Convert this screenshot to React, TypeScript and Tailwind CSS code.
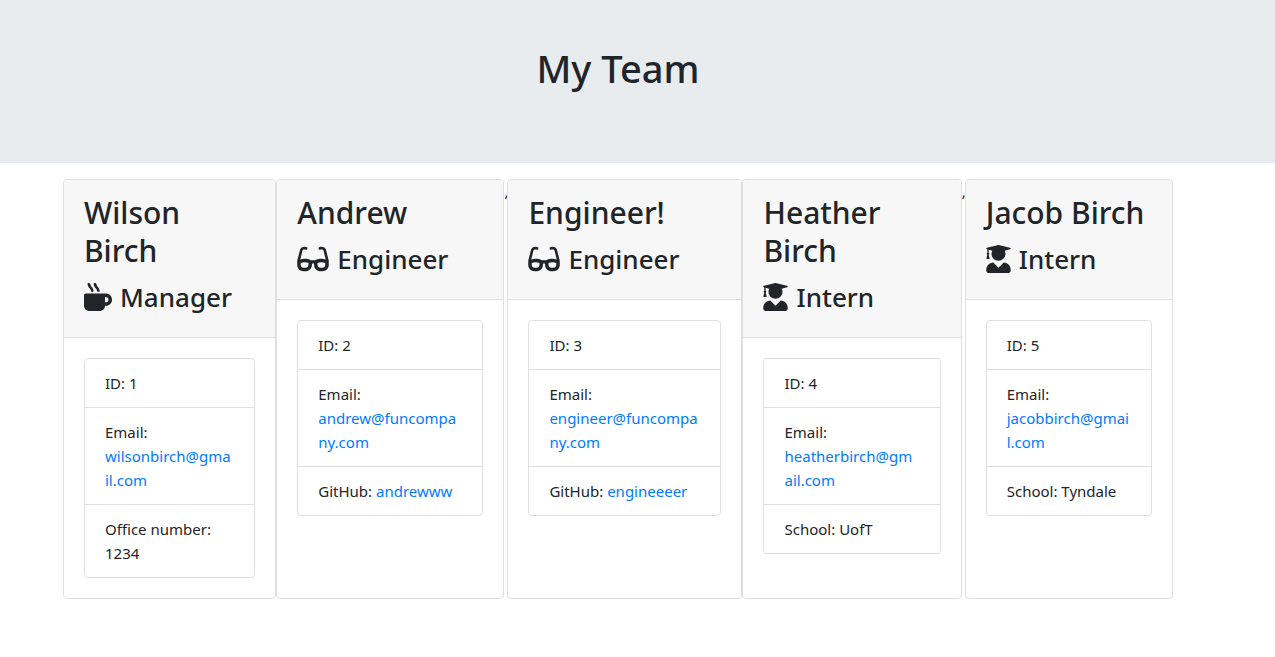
import { Fragment } from 'react';
import type { IconType } from 'react-icons';
import { FaGlasses, FaMugHot, FaUserGraduate } from 'react-icons/fa';

type Member = {
  name: string;
  role: keyof typeof roleIcons;
  id: number;
  email: string;
  label: string;
  value: string;
  href?: string;
  size: string;
  comma?: boolean;
};

const roleIcons: Record<'Manager' | 'Engineer' | 'Intern', { Icon: IconType; width: string }> = {
  Manager: { Icon: FaMugHot, width: 'w-7' },
  Engineer: { Icon: FaGlasses, width: 'w-8' },
  Intern: { Icon: FaUserGraduate, width: 'w-[25px]' },
};

const team: Member[] = [
  { name: 'Wilson Birch', role: 'Manager', id: 1, email: 'wilsonbirch@gmail.com', label: 'Office number', value: '1234', size: 'flex-[213_1_0]' },
  { name: 'Andrew', role: 'Engineer', id: 2, email: 'andrew@funcompany.com', label: 'GitHub', value: 'andrewww', href: 'https://github.com/andrewww', size: 'flex-[228_1_0]', comma: true },
  { name: 'Engineer!', role: 'Engineer', id: 3, email: 'engineer@funcompany.com', label: 'GitHub', value: 'engineeeer', href: 'https://github.com/engineeeer', size: 'flex-[235_1_0]' },
  { name: 'Heather Birch', role: 'Intern', id: 4, email: 'heatherbirch@gmail.com', label: 'School', value: 'UofT', size: 'flex-[219_1_0]', comma: true },
  { name: 'Jacob Birch', role: 'Intern', id: 5, email: 'jacobbirch@gmail.com', label: 'School', value: 'Tyndale', size: 'flex-[208_1_0]' },
];

function Card({ member }: { member: Member }) {
  const { name, role, id, email, label, value, href, size } = member;
  const { Icon, width } = roleIcons[role];
  return (
    <article className={`min-w-0 rounded border border-[#dfdfdf] bg-white ${size}`}>
      <header className="rounded-t-[3px] border-b border-[#dfdfdf] bg-[#f7f7f7] pt-3.5 pr-4 pb-[23px] pl-5">
        <h2 className="mb-2.5 text-[30px] leading-[38px] font-medium">{name}</h2>
        <h3 className="flex items-center gap-2 text-[26px] leading-[34px] font-medium">
          <Icon className={`h-7 shrink-0 ${width}`} aria-hidden="true" />
          {role}
        </h3>
      </header>
      <div className="p-5">
        <ul className="divide-y divide-[#dfdfdf] rounded border border-[#dfdfdf] wrap-break-word">
          <li className="px-5 py-3">ID: {id}</li>
          <li className="px-5 py-3">
            Email: <a href={`mailto:${email}`} className="text-[#007bff] hover:underline">{email}</a>
          </li>
          <li className="px-5 py-3">
            {label}: {href ? <a href={href} className="text-[#007bff] hover:underline">{value}</a> : value}
          </li>
        </ul>
      </div>
    </article>
  );
}

export default function App() {
  return (
    <div className="font-['Noto_Sans',sans-serif] text-[15px] leading-6 text-[#212529]">
      <header className="mb-4 bg-[#e9ecef] pt-11 pr-[102px] pb-[71px] pl-[63px]">
        <h1 className="text-center text-[38px] leading-[48px] font-medium">My Team</h1>
      </header>
      <main className="flex pr-[102px] pl-[63px]">
        {team.map((member) => (
          <Fragment key={member.id}>
            <Card member={member} />
            {member.comma && <span className="w-[3px] shrink-0">,</span>}
          </Fragment>
        ))}
      </main>
    </div>
  );
}
